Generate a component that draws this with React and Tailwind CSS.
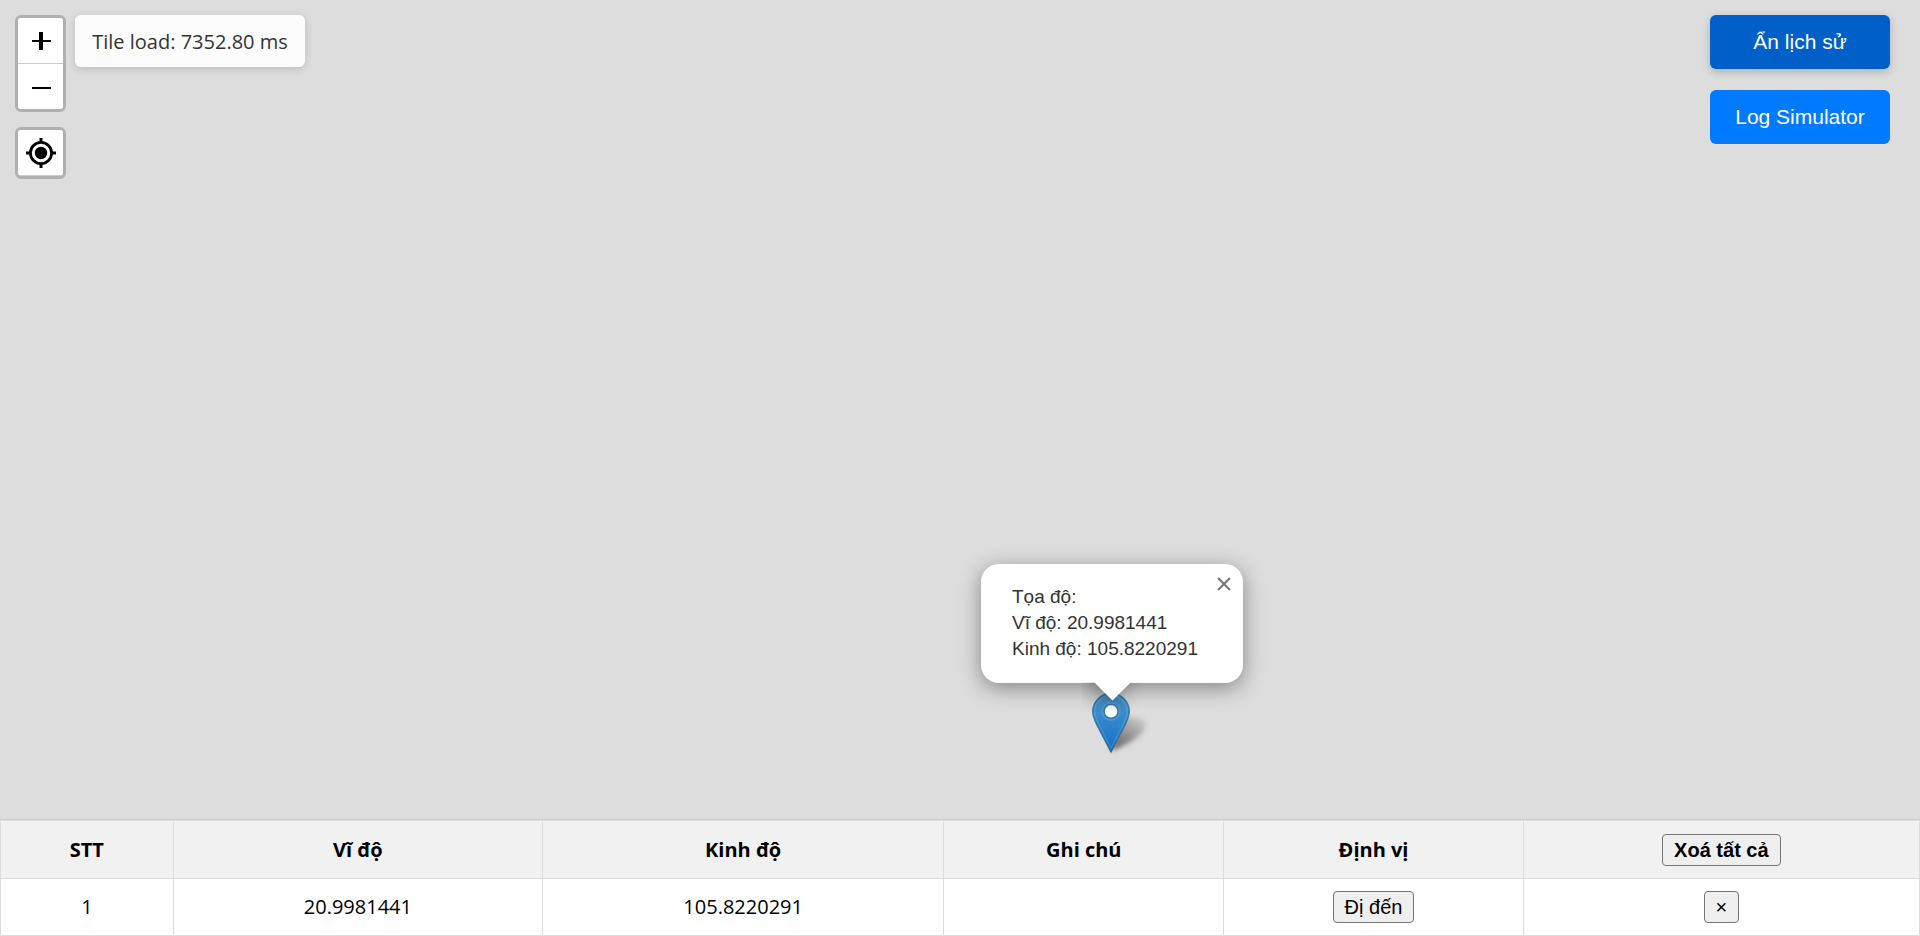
import React from "react";

const columns = [
  { label: "STT", width: "w-[9%]" },
  { label: "Vĩ độ", width: "w-[19.25%]" },
  { label: "Kinh độ", width: "w-[20.9%]" },
  { label: "Ghi chú", width: "w-[14.6%]" },
  { label: "Định vị", width: "w-[15.6%]" },
];

const history = [{ lat: "20.9981441", lng: "105.8220291", note: "" }];

function ZoomControl() {
  return (
    <div className="flex flex-col rounded-md border-[3px] border-black/20 bg-clip-padding">
      <button
        type="button"
        aria-label="Phóng to"
        className="flex h-[46px] w-[45px] items-center justify-center rounded-t-[3px] border-b border-[#ccc] bg-white"
      >
        <svg width="21" height="19" viewBox="-2 -1 21 19" shapeRendering="crispEdges">
          <path d="M0 8h19v2H0z M7 0h4v18H7z" />
        </svg>
      </button>
      <button
        type="button"
        aria-label="Thu nhỏ"
        className="flex h-[45px] w-[45px] items-center justify-center rounded-b-[3px] bg-white"
      >
        <svg width="21" height="19" viewBox="-2 -2 21 19" shapeRendering="crispEdges">
          <path d="M0 8h19v2H0z" />
        </svg>
      </button>
    </div>
  );
}

function LocateControl() {
  return (
    <div className="rounded-md border-[3px] border-black/20 bg-clip-padding">
      <button
        type="button"
        aria-label="Vị trí của tôi"
        className="flex h-[46px] w-[45px] items-center justify-center rounded-[3px] border-b border-[#ccc] bg-white"
      >
        <svg width="30" height="30" viewBox="0 0 30 30">
          <circle cx="15" cy="15" r="10.6" fill="none" stroke="#000" strokeWidth="2.8" />
          <circle cx="15" cy="15" r="6.2" />
          <path d="M13.5 0h3v4h-3z M13.5 26h3v4h-3z M0 13.5h4v3H0z M26 13.5h4v3h-4z" />
        </svg>
      </button>
    </div>
  );
}

function Marker() {
  return (
    <svg
      className="absolute bottom-[66px] left-[1092px] overflow-visible"
      width="38"
      height="62"
      viewBox="404 502 25 41"
    >
      <defs>
        <linearGradient id="pin-fill" x1="0" y1="1" x2="0" y2="0">
          <stop offset="0" stopColor="#126fc6" />
          <stop offset="1" stopColor="#4c9cd1" />
        </linearGradient>
        <linearGradient id="pin-edge" x1="0" y1="1" x2="0" y2="0">
          <stop offset="0" stopColor="#2e6c97" />
          <stop offset="1" stopColor="#3883b7" />
        </linearGradient>
        <linearGradient id="pin-shadow" x1="0" y1="1" x2="0.7" y2="0">
          <stop offset="0" stopColor="#000" stopOpacity="0.6" />
          <stop offset="1" stopColor="#000" stopOpacity="0.1" />
        </linearGradient>
        <filter id="pin-blur" x="-50%" y="-50%" width="200%" height="200%">
          <feGaussianBlur stdDeviation="1.6" />
        </filter>
      </defs>
      <path
        d="M417 541.5 L421 523 C426 517 440 518 439.500 525 C438 532 426 538 417 541.500z"
        fill="url(#pin-shadow)"
        filter="url(#pin-blur)"
      />
      <circle cx="416.5" cy="515.5" r="6" fill="#fff" />
      <path
        d="M416.544 503.612c-6.573 0-12.044 5.691-12.044 11.866 0 2.778 1.564 6.308 2.694 8.746l9.306 17.872 9.262-17.872c1.13-2.438 2.738-5.791 2.738-8.746 0-6.175-5.383-11.866-11.956-11.866zm0 7.155a4.714 4.714 0 0 1 4.679 4.71c0 2.588-2.095 4.663-4.679 4.679-2.584-.017-4.679-2.09-4.679-4.679a4.714 4.714 0 0 1 4.679-4.71z"
        fill="url(#pin-fill)"
        stroke="url(#pin-edge)"
        strokeWidth="1.1"
      />
      <path
        d="M416.544 504.712c-5.944 0-10.938 5.219-10.938 10.75 0 2.359 1.443 5.832 2.563 8.25l.031.031 8.313 15.969 8.25-15.969.031-.031c1.135-2.448 2.625-5.706 2.625-8.25 0-5.538-4.931-10.75-10.875-10.75zm0 4.969c3.168.021 5.781 2.601 5.781 5.781 0 3.18-2.613 5.761-5.781 5.781-3.168-.020-5.750-2.610-5.750-5.781 0-3.172 2.582-5.761 5.750-5.781z"
        fill="none"
        stroke="#fff"
        strokeOpacity="0.122"
        strokeWidth="1.1"
      />
    </svg>
  );
}

function Popup() {
  return (
    <div className="absolute bottom-[136px] left-[981px] font-['Liberation_Sans',Arial,sans-serif] text-[19px] leading-[26px] text-[#333]">
      <div className="relative w-[262px] rounded-[18px] bg-white pt-5 pr-9 pb-[21px] pl-[31px] whitespace-nowrap shadow-[0_5px_21px_rgba(0,0,0,0.4)]">
        Tọa độ:
        <br />
        Vĩ độ: 20.9981441
        <br />
        Kinh độ: 105.8220291
        <button
          type="button"
          aria-label="Đóng"
          className="absolute top-0 right-0 flex h-10 w-[38px] items-center justify-center"
        >
          <svg width="14" height="14" viewBox="0 0 14 14" stroke="#757575" strokeWidth="2">
            <path d="M1 1l12 12M13 1L1 13" />
          </svg>
        </button>
      </div>
      <div className="absolute top-full left-1/2 -mt-px flex h-[30px] w-[60px] -translate-x-1/2 justify-center overflow-hidden">
        <div className="-mt-[14px] size-[27px] rotate-45 bg-white shadow-[0_5px_21px_rgba(0,0,0,0.4)]" />
      </div>
    </div>
  );
}

const tableButton =
  "h-8 rounded-[4px] border border-[#767676] bg-[#efefef] px-[11px] font-['Liberation_Sans',Arial,sans-serif] text-xl leading-none text-black";

export default function App() {
  return (
    <div className="flex h-screen flex-col overflow-hidden bg-white font-['Open_Sans','Noto_Sans',sans-serif]">
      <main className="relative flex min-h-0 flex-1 items-start justify-between bg-[#ddd] pt-[15px] pr-[30px] pl-[15px]">
        <Marker />
        <Popup />
        <div className="flex items-start gap-[9px]">
          <div className="flex flex-col gap-[15px]">
            <ZoomControl />
            <LocateControl />
          </div>
          <div className="flex h-[52px] w-[230px] items-center justify-center rounded-md bg-white/90 pt-px text-xl whitespace-nowrap text-[#333] shadow-[0_2px_8px_rgba(0,0,0,0.15)]">
            Tile load: 7352.80 ms
          </div>
        </div>
        <div className="flex w-[180px] flex-col gap-[21px] font-['Liberation_Sans',Arial,sans-serif] text-[21px] text-white">
          <button
            type="button"
            className="h-[54px] rounded-md bg-[#005fc8] shadow-[0_3px_9px_rgba(0,0,0,0.2)]"
          >
            Ẩn lịch sử
          </button>
          <button type="button" className="h-[54px] rounded-md bg-[#007bff]">
            Log Simulator
          </button>
        </div>
      </main>

      <section className="border-t border-[#ccc]">
        <table className="w-full table-fixed border-collapse text-center text-xl text-black">
          <thead className="bg-[#f1f1f1]">
            <tr className="h-[58px]">
              {columns.map((c) => (
                <th key={c.label} className={`${c.width} border border-[#ddd] font-bold`}>
                  {c.label}
                </th>
              ))}
              <th className="border border-[#ddd]">
                <button type="button" className={`${tableButton} font-bold`}>
                  Xoá tất cả
                </button>
              </th>
            </tr>
          </thead>
          <tbody>
            {history.map((row, i) => (
              <tr key={row.lat} className="h-[57px]">
                <td className="border border-[#ddd]">{i + 1}</td>
                <td className="border border-[#ddd]">{row.lat}</td>
                <td className="border border-[#ddd]">{row.lng}</td>
                <td className="border border-[#ddd]">{row.note}</td>
                <td className="border border-[#ddd]">
                  <button type="button" className={tableButton}>
                    Đị đến
                  </button>
                </td>
                <td className="border border-[#ddd]">
                  <button type="button" aria-label="Xoá" className={tableButton}>
                    ×
                  </button>
                </td>
              </tr>
            ))}
          </tbody>
        </table>
      </section>
    </div>
  );
}
